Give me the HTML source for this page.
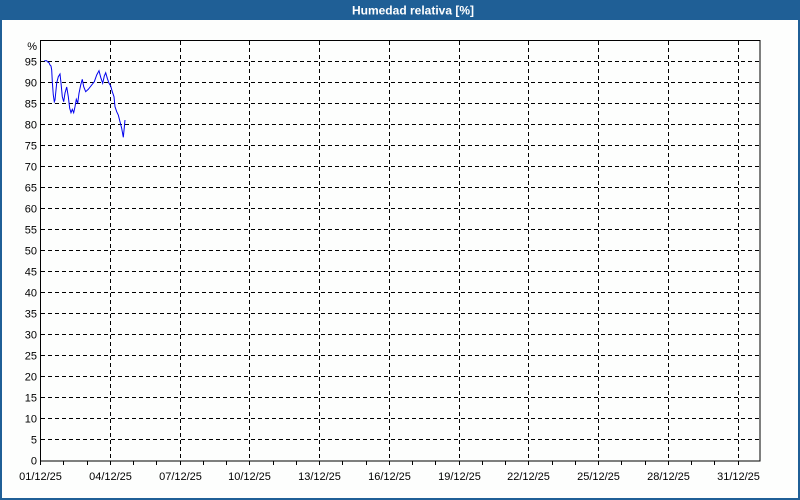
<!DOCTYPE html>
<html><head><meta charset="utf-8"><style>
html,body{margin:0;padding:0;background:#fff;}
svg{display:block;}
text{font-family:"Liberation Sans",sans-serif;font-size:11px;fill:#000;}
</style></head><body>
<svg width="800" height="500" xmlns="http://www.w3.org/2000/svg" shape-rendering="crispEdges">
<rect x="0" y="0" width="800" height="500" fill="#1f5f96"/>
<rect x="2" y="20" width="796" height="478" fill="#fdfefd"/>
<text x="413" y="14.5" text-anchor="middle" style="font-weight:bold;font-size:12px;fill:#fff">Humedad relativa [%]</text>
<g id="grid" stroke="#000" stroke-width="1" stroke-dasharray="4,3"></g>
<rect x="40.5" y="40.5" width="719.5" height="420.5" fill="none" stroke="#000"/>
<g id="ticks" stroke="#000"></g>
<g id="labels"></g>
<polyline shape-rendering="auto" fill="none" stroke="#0000ee" stroke-width="1" points="44.3,60.7 46.7,60.7 47.7,62 49,62.7 50,65 51,66 51.7,70 52.3,81.7 53.3,95 54.3,101.7 55,100 55.7,93 56.7,83 58.3,76.7 60,74 61,83 62.3,96.7 63.7,101.7 65,93 66.7,87 68.3,96.7 69.7,108.3 71,112.7 72.3,109.3 73.7,112.7 75,106.7 76.3,99.3 77.7,103.3 79,93.3 80.7,85 82.3,79.3 83.7,86.7 85.7,91.7 88.3,89.3 91.7,85 94.3,81.7 96.7,75 99,70.7 100.7,77.3 102.7,83.3 104.3,76 105.7,72.7 107.3,78.3 109,83.3 110.7,86 112.3,91.7 114,96.7 115,106.7 116.7,111.7 118.3,115 120,121.7 121.7,128.3 123.3,137.3 124.3,127.3 125,120"/>
</svg>
<script>
var ns="http://www.w3.org/2000/svg";
var g=document.getElementById('grid'),t=document.getElementById('ticks'),l=document.getElementById('labels');
function el(p,n,a,txt){var e=document.createElementNS(ns,n);for(var k in a)e.setAttribute(k,a[k]);if(txt)e.textContent=txt;p.appendChild(e);}
for(var k=0;k<=19;k++){var y=460.5-21*k;if(k>0)el(g,'line',{x1:41,x2:760,y1:y,y2:y});el(l,'text',{x:37,y:y+4,'text-anchor':'end'},String(k*5));}
el(l,'text',{x:37,y:50,'text-anchor':'end'},'%');
for(var d=1;d<=31;d++){var x=Math.round(40+(d-1)*23.25)+0.5;el(t,'line',{x1:x,x2:x,y1:461,y2:465});
if((d-1)%3==0){if(d>1)el(g,'line',{x1:x,x2:x,y1:41,y2:461});var s=(d<10?'0':'')+d+'/12/25';el(l,'text',{x:x,y:480,'text-anchor':'middle'},s);}}
</script>
</body></html>
